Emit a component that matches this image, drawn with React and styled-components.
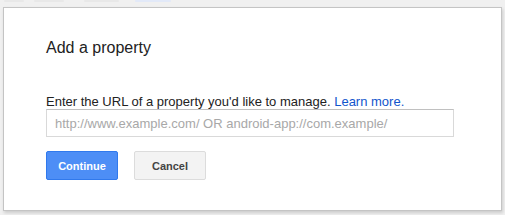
import React from "react";
import styled, { createGlobalStyle } from "styled-components";

const Global = createGlobalStyle`
  html, body { margin: 0; padding: 0; }
  body {
    background: #f0f0f0;
    font-family: Arial, "Liberation Sans", sans-serif;
    width: 505px;
    height: 215px;
    overflow: hidden;
  }
`;

const Page = styled.div`
  position: relative;
  width: 505px;
  height: 215px;
  background: #f0f0f0;
  padding: 7px 0 0 3px;
  box-sizing: border-box;
`;

const FaintBar = styled.div`
  position: absolute;
  top: 0;
  left: 0;
  width: 505px;
  height: 7px;
  display: flex;
  gap: 10px;
  align-items: flex-start;
`;

const FaintText = styled.span`
  display: block;
  height: 2px;
  width: ${(p) => p.$w}px;
  margin-left: ${(p) => p.$ml || 0}px;
  background: ${(p) => p.$c || "#e8e8e8"};
  border-radius: 1px;
`;

const Dialog = styled.div`
  position: relative;
  width: 499px;
  height: 204px;
  box-sizing: border-box;
  background: #fff;
  border: 1px solid #c4c4c4;
  box-shadow: 1px 2px 3px rgba(0, 0, 0, 0.15);
  padding: 31px 0 0 42px;
  display: flex;
  flex-direction: column;
  align-items: flex-start;
`;

const Title = styled.h2`
  margin: 0;
  font-size: 16px;
  line-height: 18px;
  font-weight: normal;
  color: #222;
`;

const Label = styled.label`
  margin-top: 37px;
  font-size: 13px;
  line-height: 15px;
  color: #222;
`;

const Link = styled.a`
  color: #1155cc;
  text-decoration: none;
`;

const Input = styled.input`
  margin: 0;
  width: 408px;
  height: 28px;
  box-sizing: border-box;
  border: 1px solid #d9d9d9;
  border-top-color: #c0c0c0;
  padding: 0 8px;
  font-family: Arial, "Liberation Sans", sans-serif;
  font-size: 13px;
  color: #222;
  outline: none;
  &::placeholder { color: #a8a8a8; }
`;

const Buttons = styled.div`
  margin-top: 14px;
  display: flex;
  gap: 16px;
`;

const Button = styled.button`
  width: 72px;
  height: 29px;
  box-sizing: border-box;
  border-radius: 2px;
  font-family: Arial, "Liberation Sans", sans-serif;
  font-size: 11px;
  font-weight: bold;
  padding: 0;
  cursor: pointer;
  border: 1px solid ${(p) => (p.$primary ? "#3079ed" : "#dcdcdc")};
  background: ${(p) => (p.$primary ? "#4d8ef6" : "#f3f3f3")};
  color: ${(p) => (p.$primary ? "#fff" : "#444")};
`;

export default function App() {
  return (
    <>
      <Global />
      <Page>
        <FaintBar>
          <FaintText $w={20} $ml={4} />
          <FaintText $w={30} />
          <FaintText $w={35} $ml={10} />
          <FaintText $w={36} $ml={6} $c="#e2e9f8" />
        </FaintBar>
        <Dialog>
          <Title>Add a property</Title>
          <Label>
            Enter the URL of a property you'd like to manage.{" "}
            <Link href="#">Learn more.</Link>
          </Label>
          <Input placeholder="http://www.example.com/ OR android-app://com.example/" />
          <Buttons>
            <Button $primary>Continue</Button>
            <Button>Cancel</Button>
          </Buttons>
        </Dialog>
      </Page>
    </>
  );
}
